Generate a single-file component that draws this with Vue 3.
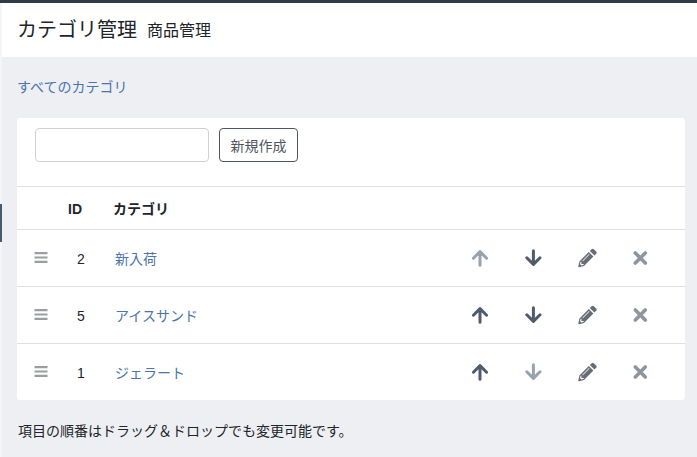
<script setup>
const rows = [
  { id: 2, name: '新入荷', up: false, down: true },
  { id: 5, name: 'アイスサンド', up: true, down: true },
  { id: 1, name: 'ジェラート', up: true, down: false },
]
</script>

<template>
  <div class="shell">
    <aside class="rail"><span class="rail-mark"></span></aside>
    <main class="main">
      <header class="head">
        <h1>カテゴリ管理</h1>
        <small>商品管理</small>
      </header>
      <div class="body">
        <a class="crumb">すべてのカテゴリ</a>
        <section class="card">
          <div class="form">
            <input class="input" type="text" />
            <button class="btn">新規作成</button>
          </div>
          <div class="row thead">
            <span class="c-grip"></span>
            <span class="c-id">ID</span>
            <span class="c-name">カテゴリ</span>
          </div>
          <div v-for="r in rows" :key="r.id" class="row item">
            <span class="c-grip">
              <svg width="14" height="14" viewBox="0 0 14 14"><path d="M.5 1h13v2.2H.5zM.5 5.4h13v2.2H.5zM.5 9.8h13v2.2H.5z" fill="#9a9da2"/></svg>
            </span>
            <span class="c-id">{{ r.id }}</span>
            <a class="c-name link">{{ r.name }}</a>
            <span class="actions">
              <span class="act">
                <svg width="18" height="18" viewBox="0 0 18 18" :class="r.up ? 'on' : 'off'"><path d="M9 16.2V3M2.4 9.2 9 2.6l6.6 6.6" fill="none" stroke="currentColor" stroke-width="3" stroke-linecap="round" stroke-linejoin="round"/></svg>
              </span>
              <span class="act">
                <svg width="18" height="18" viewBox="0.6 0 18 18" :class="r.down ? 'on' : 'off'"><path d="M9 1.8V15M2.4 8.8 9 15.4l6.6-6.6" fill="none" stroke="currentColor" stroke-width="3" stroke-linecap="round" stroke-linejoin="round"/></svg>
              </span>
              <span class="act">
                <svg class="pen" width="20" height="20" viewBox="-0.4 0 20 20"><path fill-rule="evenodd" d="M14.2 1.2a1.6 1.6 0 0 1 2.2 0l2.4 2.4a1.6 1.6 0 0 1 0 2.2l-1.8 1.8-4.6-4.6zM11.4 4l4.6 4.6-9.4 9.4-5 1.2a.6.6 0 0 1-.7-.7l1.1-5.1zM4 13.3l-.9.9-.5 1.9 1.3 1.3 1.9-.5.9-.9H4zM5 12.7l6.6-6.6.5.5-6.6 6.6z" fill="currentColor"/></svg>
              </span>
              <span class="act">
                <svg width="16" height="16" viewBox="-0.3 0 16 16"><path d="M3 3l10 10M13 3 3 13" fill="none" stroke="#8e959e" stroke-width="3.6" stroke-linecap="round"/></svg>
              </span>
            </span>
          </div>
        </section>
        <p class="note">項目の順番はドラッグ＆ドロップでも変更可能です。</p>
      </div>
    </main>
  </div>
</template>

<style>
html, body { margin: 0; background: #fff; }
</style>

<style scoped>
.shell {
  display: flex;
  width: 697px;
  height: 457px;
  overflow: hidden;
  border-top: 3px solid #2f3b47;
  box-sizing: border-box;
  font-family: "Liberation Sans", "Noto Sans CJK JP", sans-serif;
  color: #212529;
}
.rail { width: 2px; background: #f4f5f7; position: relative; flex: none; }
.rail-mark { position: absolute; left: 0; top: 201px; width: 2px; height: 38px; background: #4a5a6a; }
.main { flex: 1; min-width: 0; background: #edeff3; }
.head {
  height: 54px;
  background: #fff;
  display: flex;
  align-items: center;
  padding: 0 0 3px 15px;
  box-sizing: border-box;
  gap: 10px;
}
h1 { margin: 0; font-size: 20px; font-weight: 400; }
small { font-size: 16px; padding-top: 1px; }
.body { padding: 20px 12px 0 15px; }
.crumb { display: block; font-size: 14px; line-height: 20px; color: #4a74ab; }
.card { margin-top: 21px; background: #fff; border-radius: 3px; }
.form {
  display: flex;
  gap: 10px;
  padding: 10px 18px 24px;
}
.input {
  width: 174px;
  height: 34px;
  box-sizing: border-box;
  border: 1px solid #ced0d6;
  border-radius: 4px;
  background: #fff;
  margin: 0;
}
.btn {
  height: 34px;
  width: 79px;
  box-sizing: border-box;
  border: 1px solid #50565e;
  border-radius: 4px;
  background: #fff;
  color: #50565e;
  font: inherit;
  font-size: 14px;
  padding: 0;
}
.row {
  display: flex;
  align-items: center;
  border-top: 1px solid #dfe0e4;
  box-sizing: border-box;
}
.thead { height: 43px; font-weight: 700; font-size: 14px; }
.item { height: 57px; font-size: 14px; }
.c-grip { width: 48px; padding-left: 17px; box-sizing: border-box; display: flex; flex: none; }
.c-id { width: 48px; flex: none; padding: 2px 0 0 3px; box-sizing: border-box; }
.item .c-id { padding-left: 12px; }
.c-name { flex: 1; }
.item .c-name { padding-left: 2px; }
.link { color: #4a74ab; }
.actions { display: flex; padding-right: 18px; }
.act { width: 53.3px; display: flex; justify-content: center; align-items: center; }
.on { color: #505c6c; }
.off { color: #98a3af; }
.pen { color: #666d76; }
.note { margin: 21px 0 0 1px; font-size: 14px; line-height: 20px; }
</style>
